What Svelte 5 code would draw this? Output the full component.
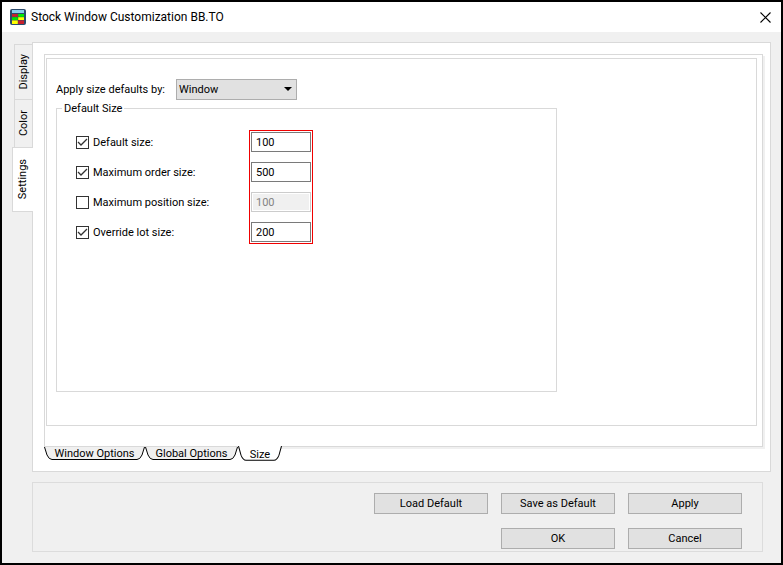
<script lang="ts">
    type SizeRow = { id: string; label: string; checked: boolean; value: string };

    const sideTabs = ["Display", "Color", "Settings"];
    let sideTab = $state("Settings");

    const pageTabs = [
        { name: "Window Options", width: 101 },
        { name: "Global Options", width: 93 },
        { name: "Size", width: 44 },
    ];
    let pageTab = $state("Size");

    let applyBy = $state("Window");
    let rows: SizeRow[] = $state([
        { id: "default", label: "Default size:", checked: true, value: "100" },
        { id: "order", label: "Maximum order size:", checked: true, value: "500" },
        { id: "position", label: "Maximum position size:", checked: false, value: "100" },
        { id: "lot", label: "Override lot size:", checked: true, value: "200" },
    ]);
</script>

<div class="window">
    <header>
        <svg class="logo" width="16" height="16" viewBox="0 0 16 16">
            <rect width="16" height="16" rx="2" fill="#2b4a6b" />
            <rect x="2" y="1" width="12" height="3" fill="#87ceeb" />
            <rect x="2" y="5" width="6" height="3" fill="#c8202c" />
            <rect x="8" y="5" width="6" height="3" fill="#00f000" />
            <rect x="2" y="8" width="6" height="3" fill="#00e000" />
            <rect x="8" y="8" width="6" height="3" fill="#ffff00" />
            <rect x="2" y="11" width="6" height="4" fill="#ffff00" />
            <rect x="8" y="11" width="6" height="4" fill="#c8202c" />
            <path d="M2 8H14M2 11.5H14M8 5V15" stroke="#2b4a6b" stroke-width="0.4" />
        </svg>
        <h1>Stock Window Customization BB.TO</h1>
        <button class="close" aria-label="Close">
            <svg width="11" height="11" viewBox="0 0 11 11">
                <path d="M0.5 0.5L10.5 10.5M10.5 0.5L0.5 10.5" stroke="#000" stroke-width="1.1" />
            </svg>
        </button>
    </header>

    <div class="body">
        <nav class="side">
            {#each sideTabs as tab}
                <button class:active={sideTab == tab} onclick={() => (sideTab = tab)}><span>{tab}</span></button>
            {/each}
        </nav>

        <main>
            <div class="sheet">
                <div class="page">
                    <div class="apply">
                        <label for="apply-by">Apply size defaults by:</label>
                        <div class="combo">
                            <select id="apply-by" bind:value={applyBy}>
                                <option>Window</option>
                                <option>Global</option>
                            </select>
                            <svg width="8" height="4" viewBox="0 0 8 4"><path d="M0 0H8L4 4Z" /></svg>
                        </div>
                    </div>

                    <fieldset>
                        <legend>Default Size</legend>
                        <div class="checks">
                            {#each rows as row}
                                <label>
                                    <input type="checkbox" bind:checked={row.checked} />
                                    <svg class="tick" width="13" height="13" viewBox="0 0 13 13">
                                        <path d="M2 6L5 9L11 3" />
                                    </svg>
                                    <span>{row.label}</span>
                                </label>
                            {/each}
                        </div>
                        <div class="values">
                            {#each rows as row}
                                <input type="text" aria-label={row.label} bind:value={row.value} disabled={!row.checked} />
                            {/each}
                        </div>
                    </fieldset>
                </div>
            </div>

            <div class="tabs">
                {#each pageTabs as tab}
                    <button class:active={pageTab == tab.name} onclick={() => (pageTab = tab.name)}>
                        <svg width={tab.width} height="14" viewBox="0 0 {tab.width} 14" preserveAspectRatio="none">
                            <path d="M0.5 0L3 8Q5 12.5 8 12.5H{tab.width - 8}Q{tab.width - 5} 12.5 {tab.width - 3} 8L{tab.width - 0.5} 0" />
                        </svg>
                        <span>{tab.name}</span>
                    </button>
                {/each}
            </div>
        </main>

        <footer>
            <button>Load Default</button>
            <button>Save as Default</button>
            <button>Apply</button>
            <button class="ok">OK</button>
            <button>Cancel</button>
        </footer>
    </div>
</div>

<style>
    :global(body) {
        background: #f0f0f0;
    }
    .window {
        box-sizing: border-box;
        min-height: 100vh;
        border: 2px solid #000;
        background: #f0f0f0;
        color: #000;
        font: 11px/14px Tahoma, Roboto, sans-serif;
    }
    button,
    input,
    select {
        font: inherit;
        color: inherit;
    }
    svg {
        display: block;
    }
    header {
        display: flex;
        align-items: center;
        height: 30px;
        padding: 0 10px 0 8px;
        background: #fff;
    }
    h1 {
        flex: 1;
        margin: 0 0 0 5px;
        font: 12px/16px "Segoe UI", Roboto, sans-serif;
    }
    .close {
        padding: 0;
        border: 0;
        background: none;
    }
    .body {
        display: grid;
        grid-template-columns: 20px 1fr;
        row-gap: 10px;
        padding: 10px 10px 11px;
    }
    .side {
        display: flex;
        flex-direction: column;
        align-items: flex-end;
        padding-top: 2px;
    }
    .side button {
        display: flex;
        align-items: center;
        justify-content: center;
        width: 18px;
        height: 55px;
        padding: 0;
        border: 1px solid #d9d9d9;
        border-width: 1px 0 0 1px;
        background: #f0f0f0;
    }
    .side button:nth-child(2) {
        height: 48px;
    }
    .side .active {
        position: relative;
        width: 21px;
        height: 65px;
        margin-right: -1px;
        border-bottom-width: 1px;
        background: #fff;
    }
    .side span {
        writing-mode: vertical-rl;
        transform: rotate(180deg);
    }
    main {
        padding: 11px 7px 9px 11px;
        border: 1px solid #d9d9d9;
        background: #fff;
    }
    .sheet {
        padding: 3px 5px 20px 1px;
        border: 1px solid #d9d9d9;
        box-shadow: 2px 2px 0 #f0f0f0;
    }
    .page {
        box-sizing: border-box;
        min-height: 368px;
        padding: 20px 9px;
        border: 1px solid #d9d9d9;
    }
    .apply {
        display: flex;
        align-items: center;
        height: 21px;
    }
    .apply label {
        width: 120px;
    }
    .combo {
        position: relative;
    }
    select {
        display: block;
        width: 121px;
        height: 21px;
        padding: 0 2px;
        border: 1px solid #adadad;
        border-radius: 0;
        background: #e1e1e1;
        appearance: none;
    }
    .combo svg {
        position: absolute;
        top: 8px;
        right: 5px;
        pointer-events: none;
    }
    fieldset {
        box-sizing: border-box;
        display: flex;
        width: 501px;
        max-width: 100%;
        height: 292px;
        margin: 0;
        padding: 11px 19px 0;
        border: 1px solid #d9d9d9;
    }
    legend {
        margin-left: -14px;
        padding: 2px 2px 0;
    }
    .checks {
        width: 173px;
    }
    .checks label {
        display: flex;
        align-items: center;
        gap: 4px;
        height: 30px;
    }
    .checks input {
        width: 13px;
        height: 13px;
        margin: 0;
        border: 1px solid #333;
        background: #fff;
        appearance: none;
    }
    .checks span {
        padding-top: 2px;
    }
    .tick {
        display: none;
        margin-left: -17px;
        fill: none;
        stroke: #333;
        stroke-width: 1.3;
    }
    input:checked + .tick {
        display: block;
    }
    .values {
        display: flex;
        flex-direction: column;
        gap: 10px;
        align-self: flex-start;
        margin-top: 3px;
        padding: 1px;
        border: 1px solid #f00000;
    }
    .values input {
        box-sizing: border-box;
        width: 60px;
        height: 20px;
        padding: 0 4px;
        border: 1px solid #7a7a7a;
        border-radius: 0;
        background: #fff;
    }
    .values input:disabled {
        border-color: #ccc;
        background: #f0f0f0;
        box-shadow: inset 0 0 0 1px #fff;
        color: #838383;
    }
    .tabs {
        display: flex;
        align-items: flex-start;
    }
    .tabs button {
        display: grid;
        padding: 0;
        border: 0;
        background: none;
    }
    .tabs svg,
    .tabs span {
        grid-area: 1 / 1;
    }
    .tabs path {
        fill: #f0f0f0;
        stroke: #000;
    }
    .tabs .active {
        position: relative;
        margin-top: -1px;
    }
    .tabs .active svg {
        height: 16px;
    }
    .tabs .active path {
        fill: #fff;
    }
    .tabs .active span {
        padding-top: 2px;
    }
    footer {
        grid-column: 2;
        display: grid;
        grid-template-columns: repeat(3, 114px);
        justify-content: end;
        gap: 14px 13px;
        margin-right: 8px;
        padding: 10px 20px 2px;
        border: 1px solid #dcdcdc;
    }
    footer button {
        height: 21px;
        padding: 0;
        border: 1px solid #adadad;
        background: #e1e1e1;
    }
    .ok {
        grid-column: 2;
    }
</style>
